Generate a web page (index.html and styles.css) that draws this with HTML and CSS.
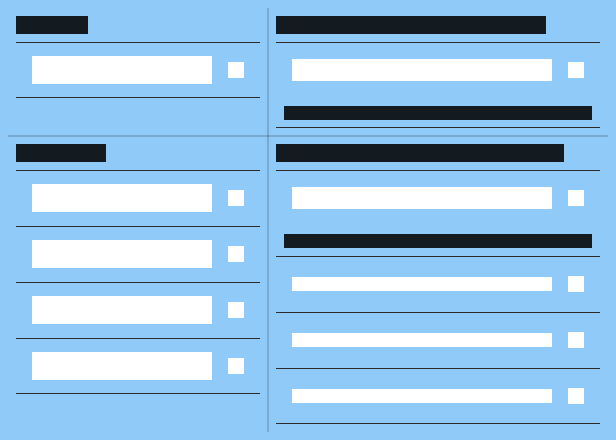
FILE: index.html
```html
<!DOCTYPE html>
<html lang="en">
<head>
<meta charset="utf-8">
<meta name="viewport" content="width=device-width, initial-scale=1">
<title>Items</title>
<link rel="stylesheet" href="styles.css">
</head>
<body>
<main class="board">
  <section class="panel">
    <div class="title title-xs"></div>
    <div class="rows">
      <div class="row"><input class="field" type="text" aria-label="Item"><input class="check" type="checkbox" aria-label="Select item"></div>
    </div>
  </section>
  <section class="panel">
    <div class="title title-lg"></div>
    <div class="rows">
      <div class="row"><input class="field field-md" type="text" aria-label="Item"><input class="check" type="checkbox" aria-label="Select item"></div>
      <div class="subrow"><div class="subtitle"></div></div>
    </div>
  </section>
  <section class="panel">
    <div class="title title-sm"></div>
    <div class="rows">
      <div class="row"><input class="field" type="text" aria-label="Item 1"><input class="check" type="checkbox" aria-label="Select item 1"></div>
      <div class="row"><input class="field" type="text" aria-label="Item 2"><input class="check" type="checkbox" aria-label="Select item 2"></div>
      <div class="row"><input class="field" type="text" aria-label="Item 3"><input class="check" type="checkbox" aria-label="Select item 3"></div>
      <div class="row"><input class="field" type="text" aria-label="Item 4"><input class="check" type="checkbox" aria-label="Select item 4"></div>
    </div>
  </section>
  <section class="panel">
    <div class="title title-xl"></div>
    <div class="rows">
      <div class="row"><input class="field field-md" type="text" aria-label="Group"><input class="check" type="checkbox" aria-label="Select group"></div>
      <div class="subrow"><div class="subtitle"></div></div>
      <div class="row"><input class="field field-sm" type="text" aria-label="Group item 1"><input class="check" type="checkbox" aria-label="Select group item 1"></div>
      <div class="row"><input class="field field-sm" type="text" aria-label="Group item 2"><input class="check" type="checkbox" aria-label="Select group item 2"></div>
      <div class="row"><input class="field field-sm" type="text" aria-label="Group item 3"><input class="check" type="checkbox" aria-label="Select group item 3"></div>
    </div>
  </section>
  <div class="divider-x"></div>
  <div class="divider-y"></div>
</main>
</body>
</html>
```
FILE: styles.css
```css
:root {
  --ink: #131a20;
  --line: #2b2b2b;
  --divider: rgba(0, 0, 0, 0.16);
}

* {
  box-sizing: border-box;
}

body {
  margin: 8px;
  background: #90caf9;
  font-family: "Liberation Sans", sans-serif;
}

.board {
  display: grid;
  grid-template-columns: minmax(0, 13fr) minmax(0, 17fr);
  grid-template-rows: auto auto;
}

.panel {
  padding: 8px;
}

.panel:nth-child(1) { grid-area: 1 / 1; }
.panel:nth-child(2) { grid-area: 1 / 2; }
.panel:nth-child(3) { grid-area: 2 / 1; }
.panel:nth-child(4) { grid-area: 2 / 2; }

.title {
  height: 18px;
  max-width: 100%;
  margin-bottom: 8px;
  background: var(--ink);
}

.title-xs { width: 72px; }
.title-sm { width: 90px; }
.title-lg { width: 270px; }
.title-xl { width: 288px; }

.row {
  display: flex;
  align-items: center;
  gap: 16px;
  height: 56px;
  padding: 0 16px;
  box-shadow: inset 0 1px var(--line);
}

.row:last-child {
  box-shadow: inset 0 1px var(--line), inset 0 -1px var(--line);
}

.subrow {
  padding: 8px;
}

.subrow:last-child {
  box-shadow: inset 0 -1px var(--line);
}

.subtitle {
  height: 14px;
  background: var(--ink);
}

.field {
  flex: 1;
  min-width: 0;
  height: 28px;
  margin: 0;
  padding: 0 4px;
  border: 0;
  border-radius: 0;
  background: #fff;
  font: inherit;
  font-size: 12px;
}

.field-md { height: 22px; }
.field-sm { height: 14px; }

.check {
  appearance: none;
  flex: none;
  width: 16px;
  height: 16px;
  margin: 0;
  background: #fff;
}

.check:checked {
  background: var(--ink);
}

.divider-x {
  grid-area: 1 / 1 / 2 / 3;
  align-self: end;
  height: 2px;
  margin-bottom: -1px;
  background: var(--divider);
}

.divider-y {
  grid-area: 1 / 1 / 3 / 2;
  justify-self: end;
  width: 2px;
  margin-right: -1px;
  background: var(--divider);
}
```
